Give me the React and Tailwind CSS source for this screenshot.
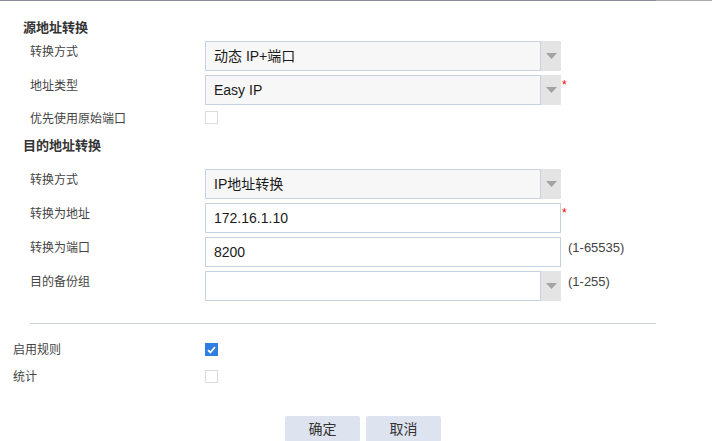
import React from "react";

const font = { fontFamily: '"Liberation Sans", "Noto Sans CJK SC", sans-serif' };

function Arrow() {
  return (
    <div className="w-[20px] shrink-0 h-full bg-[#e4e4e4] flex items-center justify-center">
      <svg width="11" height="6" viewBox="0 0 11 6">
        <path d="M0 0 H11 L5.5 6 Z" fill="#a3a3a3" />
      </svg>
    </div>
  );
}

function Select({ value, white }) {
  return (
    <div className="flex h-[30px] w-[356px] shrink-0">
      <div
        className={`flex-1 h-full border border-[#c6d1e2] ${white ? "bg-white" : "bg-[#f7f7f7]"} flex items-center pl-[8px] text-[14px] text-[#1a1a1a]`}
      >
        {value}
      </div>
      <Arrow />
    </div>
  );
}

function Input({ value }) {
  return (
    <div className="h-[30px] w-[356px] shrink-0 border border-[#c6d1e2] bg-white flex items-center pl-[8px] text-[14px] text-[#1a1a1a]">
      {value}
    </div>
  );
}

function Req() {
  return <span className="text-[#ff0000] text-[12px] leading-none ml-[1px] mt-[4px]">*</span>;
}

function Hint({ children }) {
  return <span className="ml-[7px] mt-[3px] text-[13px] leading-4 text-[#444]">{children}</span>;
}

function Row({ label, children }) {
  return (
    <div className="flex items-start h-[30px]">
      <div className="w-[205px] shrink-0 pl-[30px] pt-[3px] text-[12px] leading-4 text-[#444]">{label}</div>
      {children}
    </div>
  );
}

function Checkbox({ checked }) {
  if (checked) {
    return (
      <div className="w-[13px] h-[13px] bg-[#2f7fe0] flex items-center justify-center">
        <svg width="9" height="8" viewBox="0 0 9 8">
          <path d="M1 4.2 L3.4 6.5 L8 1" stroke="white" strokeWidth="1.8" fill="none" />
        </svg>
      </div>
    );
  }
  return <div className="w-[13px] h-[13px] border border-[#dcdcdc] bg-white" />;
}

export default function App() {
  return (
    <div className="w-[712px] h-[441px] bg-white overflow-hidden relative" style={font}>
      <div className="flex h-px">
        <div className="w-[656px] bg-[#878c98]" />
        <div className="flex-1 bg-[#a9a9a9]" />
      </div>

      <div className="mt-[19px] pl-[23px] text-[13px] leading-4 font-bold text-[#333]">源地址转换</div>

      <div className="mt-[5px] flex flex-col gap-[4px]">
        <Row label="转换方式">
          <Select value="动态 IP+端口" />
        </Row>
        <Row label="地址类型">
          <Select value="Easy IP" />
          <Req />
        </Row>
        <div className="flex items-start h-[20px]">
          <div className="w-[205px] shrink-0 pl-[30px] pt-[2px] text-[12px] leading-4 text-[#444]">优先使用原始端口</div>
          <div className="mt-[2px]">
            <Checkbox />
          </div>
        </div>
      </div>

      <div className="mt-[9px] pl-[23px] text-[13px] leading-4 font-bold text-[#333]">目的地址转换</div>

      <div className="mt-[15px] flex flex-col gap-[4px]">
        <Row label="转换方式">
          <Select value="IP地址转换" />
        </Row>
        <Row label="转换为地址">
          <Input value="172.16.1.10" />
          <Req />
        </Row>
        <Row label="转换为端口">
          <Input value="8200" />
          <Hint>(1-65535)</Hint>
        </Row>
        <Row label="目的备份组">
          <Select value="" white />
          <Hint>(1-255)</Hint>
        </Row>
      </div>

      <div className="mt-[22px] ml-[30px] w-[626px] h-px bg-[#cdd1d8]" />

      <div className="mt-[19px] flex flex-col gap-[14px]">
        <div className="flex items-center h-[13px]">
          <div className="w-[205px] shrink-0 pl-[13px] text-[12px] leading-4 text-[#444]">启用规则</div>
          <Checkbox checked />
        </div>
        <div className="flex items-center h-[13px]">
          <div className="w-[205px] shrink-0 pl-[13px] text-[12px] leading-4 text-[#444]">统计</div>
          <Checkbox />
        </div>
      </div>

      <div className="mt-[33px] flex gap-[6px] pl-[285px]">
        <button className="w-[75px] h-[26px] rounded-[2px] bg-[#dee4ef] text-[14px] text-[#333]">确定</button>
        <button className="w-[75px] h-[26px] rounded-[2px] bg-[#dee4ef] text-[14px] text-[#333]">取消</button>
      </div>
    </div>
  );
}
